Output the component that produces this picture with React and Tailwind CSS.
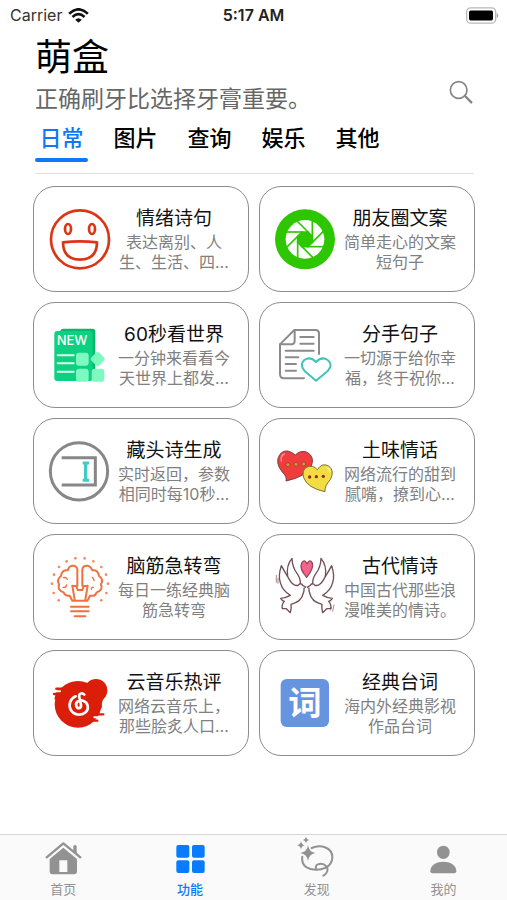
import React, { useState } from 'react';

function SmileIcon() {
  return (
    <svg viewBox="72 87 180 180" className="size-15 shrink-0 overflow-visible" fill="none" stroke="#dc3513" strokeWidth="8" aria-hidden="true">
      <circle cx="165" cy="178" r="87" />
      <ellipse cx="129" cy="147" rx="9" ry="15" />
      <ellipse cx="201" cy="147" rx="9" ry="15" />
      <path d="M114 187 Q165 181 216 187 Q216 238 165 239 Q114 238 114 187Z" strokeLinejoin="round" />
    </svg>
  );
}

function ApertureIcon() {
  return (
    <svg viewBox="63 87 180 180" className="size-15 shrink-0 overflow-visible" aria-hidden="true">
      <circle cx="153" cy="178" r="90" fill="#2ec600" />
      <circle cx="153" cy="178" r="58" fill="#fff" />
      <g transform="translate(153 178)" fill="#2ec600" stroke="#2ec600" strokeWidth="5">
        <path d="M22 -9V9L9 22H-9L-22 9V-9L-9 -22H9Z" />
        {[0, 45, 90, 135, 180, 225, 270, 315].map((angle) => (
          <path key={angle} d="M22 -62V-6" transform={`rotate(${angle})`} />
        ))}
      </g>
    </svg>
  );
}

function NewsIcon() {
  return (
    <svg viewBox="72 87 180 180" className="size-15 shrink-0 overflow-visible" aria-hidden="true">
      <rect x="106" y="98" width="105" height="145" rx="9" fill="#08b86d" />
      <rect x="88" y="105" width="115" height="150" rx="9" fill="#0bd181" />
      <path d="M98 178H146M98 202H146M98 227H146" stroke="#e4fff2" strokeWidth="6" strokeLinecap="round" />
      <text x="95" y="147" fill="#fff" fontSize="39" fontWeight="500" fontFamily="Inter, sans-serif">NEW</text>
      <g fill="#7dfac0">
        <rect x="153" y="170" width="38" height="39" rx="9" />
        <rect x="201" y="172" width="34" height="34" rx="9" transform="rotate(45 218 189)" />
        <rect x="153" y="218" width="38" height="39" rx="9" />
        <rect x="200" y="218" width="38" height="39" rx="9" />
      </g>
    </svg>
  );
}

function LetterIcon() {
  return (
    <svg viewBox="63 87 180 180" className="size-15 shrink-0 overflow-visible" fill="none" stroke="#8b8b8b" strokeWidth="6" strokeLinecap="round" strokeLinejoin="round" aria-hidden="true">
      <path d="M195 174V113Q195 102 184 102H121L78 145V235Q78 247 90 247H150" />
      <path d="M122 102V134Q122 145 110 145H78" />
      <path d="M139 123H179M139 143H179M95 164H179M95 184H133M95 204H126M95 224H126" />
      <path d="M186 254L151 224Q136 206 151 192Q169 180 186 198Q204 180 221 192Q238 206 222 224Z" stroke="#43c1bd" />
    </svg>
  );
}

function InputCursorIcon() {
  return (
    <svg viewBox="72 87 180 180" className="size-15 shrink-0 overflow-visible" fill="none" stroke="#878787" aria-hidden="true">
      <circle cx="162" cy="178" r="86" strokeWidth="9" />
      <path d="M110 137H211V219H110" strokeWidth="9" />
      <path d="M173 153H192M173 205H192" stroke="#41cbc5" strokeWidth="9" />
      <path d="M182 153V205" stroke="#41cbc5" strokeWidth="10" />
    </svg>
  );
}

function HeartsIcon() {
  return (
    <svg viewBox="63 87 180 180" className="size-15 shrink-0 overflow-visible" strokeLinejoin="round" aria-hidden="true">
      <path d="M96 207Q100 194 84 179Q62 151 77 128Q91 110 112 121Q119 125 124 129Q139 113 160 121Q184 136 171 164Q155 194 96 207Z" fill="#f03c3d" stroke="#7c403f" strokeWidth="3" />
      <path d="M82 147Q79 130 91 126" fill="none" stroke="#ff9898" strokeWidth="4" strokeLinecap="round" />
      <path d="M213 239Q160 228 149 197Q142 174 159 165Q177 158 190 173Q204 151 224 162Q243 176 229 203Q211 222 213 239Z" fill="#f4dd43" stroke="#78713b" strokeWidth="3" />
      <path d="M228 179Q226 169 219 167" fill="none" stroke="#fff3a0" strokeWidth="4" strokeLinecap="round" />
      <g fill="#d59635" stroke="#8d3d25" strokeWidth="2">
        <circle cx="102" cy="158" r="6" />
        <circle cx="126" cy="157" r="6" />
        <circle cx="149" cy="156" r="6" />
      </g>
      <g fill="#8d301b">
        <circle cx="167" cy="195" r="5" />
        <circle cx="187" cy="194" r="5" />
        <circle cx="208" cy="193" r="5" />
      </g>
    </svg>
  );
}

function BrainIcon() {
  return (
    <svg viewBox="72 87 180 180" className="size-15 shrink-0 overflow-visible" fill="none" stroke="#f0713f" strokeWidth="6" strokeLinecap="round" strokeLinejoin="round" aria-hidden="true">
      <path d="M157 173V124Q155 112 142 113Q132 114 128 127Q110 125 108 144Q94 155 102 169Q96 187 116 193Q120 205 134 203L142 218H187L195 203Q211 206 215 193Q235 187 228 169Q237 154 222 144Q220 125 202 127Q197 114 187 113Q173 112 172 125V173" />
      <path d="M142 173L149 215M188 173L181 215M142 174H154L158 186H172L176 174H188" />
      <path d="M115 149Q123 147 127 154M202 148Q207 150 207 158M114 178Q123 179 125 171M205 178Q200 177 199 184" strokeWidth="4" />
      <path d="M138 236H191M138 250H191M149 265H181" />
      <g fill="#f58a61" stroke="none">
        <circle cx="151" cy="91" r="4" /><circle cx="179" cy="91" r="4" />
        <circle cx="125" cy="100" r="4" /><circle cx="205" cy="100" r="4" />
        <circle cx="102" cy="117" r="4" /><circle cx="229" cy="117" r="4" />
        <circle cx="87" cy="140" r="4" /><circle cx="243" cy="140" r="4" />
        <circle cx="81" cy="167" r="4" /><circle cx="249" cy="167" r="4" />
        <circle cx="86" cy="195" r="4" /><circle cx="244" cy="195" r="4" />
        <circle cx="101" cy="217" r="4" /><circle cx="229" cy="217" r="4" />
      </g>
    </svg>
  );
}

const doveOutline =
  'M155 177L147 173Q140 162 132 172Q117 176 104 151Q91 130 82 113Q72 143 79 164Q85 188 109 202Q93 211 80 211Q84 218 91 220Q82 230 85 242L97 242L109 254Q113 239 111 229Q143 221 148 195Q151 187 150 181Z';
const doveWing = 'M101 145Q96 112 114 91Q115 119 129 136Q139 149 139 166';

function DovesIcon() {
  return (
    <svg viewBox="63 87 180 180" className="size-15 shrink-0 overflow-visible" fill="none" stroke="#735057" strokeWidth="4" strokeLinecap="round" strokeLinejoin="round" aria-hidden="true">
      <path d={doveWing} />
      <path d={doveOutline} fill="#fff" />
      <g transform="matrix(-1 0 0 1 315 0)">
        <path d={doveWing} />
        <path d={doveOutline} fill="#fff" />
      </g>
      <path d="M158 148Q135 122 143 105Q152 91 159 108Q167 91 175 105Q180 122 158 148Z" fill="#f5648b" stroke="#94485e" />
      <path d="M67 142V163M72 151V166M240 231L236 250M232 239L230 246" strokeWidth="2" />
    </svg>
  );
}

function CloudMusicIcon() {
  return (
    <svg viewBox="72 87 180 180" className="size-15 shrink-0 overflow-visible" aria-hidden="true">
      <g fill="#db1e09">
        <circle cx="159" cy="181" r="70" />
        <circle cx="213" cy="139" r="34" />
        <path d="M188 117L242 157Q228 169 231 190L204 224Z" />
        <path d="M96 134H126V166H88Z" />
      </g>
      <g fill="none" strokeLinecap="round">
        <path d="M94 134H120M87 150H106M205 211H235M190 230H217" stroke="#db1e09" strokeWidth="7" />
        <path d="M91 142H105M208 220H228" stroke="#fff" strokeWidth="6" />
        <path d="M178 152C171 145 160 148 163 160L168 183C169 194 157 196 154 186C150 174 163 167 174 170C190 175 193 194 182 205C169 216 145 214 137 197C129 181 137 163 152 157" stroke="#fff" strokeWidth="8" />
      </g>
    </svg>
  );
}

function WordIcon() {
  return (
    <svg viewBox="753 87 180 180" className="size-15 shrink-0 overflow-visible" aria-hidden="true">
      <rect x="770" y="105" width="145" height="144" rx="18" fill="#6794df" />
      <text x="843" y="214" textAnchor="middle" fill="#fff" fontSize="100" fontWeight="700" fontFamily="Noto Sans CJK SC, sans-serif">词</text>
    </svg>
  );
}

function HomeIcon() {
  return (
    <svg viewBox="130 51 120 120" className="size-10" aria-hidden="true">
      <path d="M141 112L191 70L242 112" fill="none" stroke="currentColor" strokeWidth="7" strokeLinecap="round" strokeLinejoin="round" />
      <path d="M221 93V78Q226 72 231 78V101Z" fill="currentColor" />
      <path d="M191 83L232 117V154Q232 163 223 163H158Q150 163 150 154V117ZM179 121V156H203V121Z" fill="currentColor" fillRule="evenodd" />
    </svg>
  );
}

function GridIcon() {
  return (
    <svg viewBox="510 51 120 120" className="size-10" fill="currentColor" aria-hidden="true">
      <rect x="529" y="75" width="39" height="38" rx="6" />
      <rect x="576" y="75" width="38" height="38" rx="6" />
      <rect x="529" y="121" width="39" height="38" rx="6" />
      <rect x="576" y="121" width="38" height="38" rx="6" />
    </svg>
  );
}

function LassoIcon() {
  return (
    <svg viewBox="891 51 120 120" className="size-10" aria-hidden="true">
      <path d="M935 84C963 71 997 84 997 111C997 144 962 153 932 147C913 142 904 130 907 110M948 144C944 129 970 128 979 139C987 150 980 162 970 167" fill="none" stroke="currentColor" strokeWidth="6" strokeLinecap="round" />
      <path d="M924 76Q927 96 946 99Q927 102 924 123Q921 102 901 99Q921 96 924 76ZM903 64Q905 74 914 76Q905 78 903 88Q901 78 891 76Q901 74 903 64ZM918 51Q920 58 927 60Q920 62 918 69Q916 62 909 60Q916 58 918 51Z" fill="currentColor" />
    </svg>
  );
}

function PersonIcon() {
  return (
    <svg viewBox="1271 51 120 120" className="size-10" fill="currentColor" aria-hidden="true">
      <ellipse cx="1329" cy="97" rx="19" ry="20" />
      <path d="M1290 154C1290 134 1310 125 1329 125C1348 125 1368 134 1368 154Q1368 160 1361 160H1297Q1290 160 1290 154Z" />
    </svg>
  );
}

const features = [
  { title: '情绪诗句', lines: ['表达离别、人', '生、生活、四…'], Icon: SmileIcon },
  { title: '朋友圈文案', lines: ['简单走心的文案', '短句子'], Icon: ApertureIcon },
  { title: '60秒看世界', lines: ['一分钟来看看今', '天世界上都发…'], Icon: NewsIcon },
  { title: '分手句子', lines: ['一切源于给你幸', '福，终于祝你…'], Icon: LetterIcon },
  { title: '藏头诗生成', lines: ['实时返回，参数', '相同时每10秒…'], Icon: InputCursorIcon },
  { title: '土味情话', lines: ['网络流行的甜到', '腻嘴，撩到心…'], Icon: HeartsIcon },
  { title: '脑筋急转弯', lines: ['每日一练经典脑', '筋急转弯'], Icon: BrainIcon },
  { title: '古代情诗', lines: ['中国古代那些浪', '漫唯美的情诗。'], Icon: DovesIcon },
  { title: '云音乐热评', lines: ['网络云音乐上，', '那些脍炙人口…'], Icon: CloudMusicIcon },
  { title: '经典台词', lines: ['海内外经典影视', '作品台词'], Icon: WordIcon },
];

const categories = ['日常', '图片', '查询', '娱乐', '其他'];

const navItems = [
  { label: '首页', Icon: HomeIcon },
  { label: '功能', Icon: GridIcon },
  { label: '发现', Icon: LassoIcon },
  { label: '我的', Icon: PersonIcon },
];

function StatusBar() {
  return (
    <div className="grid h-[30px] grid-cols-3 items-center px-2 text-[16px] leading-5 text-[#333]">
      <div className="flex items-center gap-[6px] pl-[2px]">
        <span>Carrier</span>
        <svg viewBox="204 20 62 45" className="h-[15px] w-[21px]" fill="none" stroke="#111" strokeWidth="8" aria-hidden="true">
          <path d="M207 37Q235 11 263 37M217 47Q235 30 253 47" />
          <path d="M235 64L225 55Q235 46 245 55Z" fill="#111" stroke="none" />
        </svg>
      </div>
      <div className="text-center text-[16px] font-semibold text-[#222]">5:17 AM</div>
      <svg viewBox="642 17 99 50" className="h-[17px] w-[33px] justify-self-end" aria-hidden="true">
        <rect x="644" y="19" width="87" height="46" rx="12" fill="none" stroke="#b9b9b9" strokeWidth="4" />
        <rect x="651" y="27" width="72" height="30" rx="5" fill="#000" />
        <path d="M735 36Q741 42 735 48Z" fill="#aaa" stroke="#aaa" strokeWidth="2" />
      </svg>
    </div>
  );
}

function FeatureCard({ title, lines, Icon }) {
  return (
    <button type="button" className="flex h-[106px] items-center gap-[6px] rounded-[22px] border border-[#8c8c8c] bg-white px-[15px]">
      <Icon />
      <span className="flex min-w-0 flex-1 flex-col items-center whitespace-nowrap">
        <span className="text-[19px] leading-[26px] text-[#111]">{title}</span>
        {lines.map((line) => (
          <span key={line} className="text-[16px] leading-5 text-[#808080]">{line}</span>
        ))}
      </span>
    </button>
  );
}

export default function App() {
  const [category, setCategory] = useState('日常');
  const [page, setPage] = useState('功能');

  return (
    <div lang="zh-CN" className="flex min-h-screen flex-col bg-white font-['Inter','Noto_Sans_CJK_SC',sans-serif] text-black">
      <StatusBar />
      <header className="mr-[33px] ml-[35px] border-b border-[#e2e2e2]">
        <div className="flex items-end justify-between">
          <div>
            <h1 className="text-[37px] leading-[56px]">萌盒</h1>
            <p className="text-[23px] leading-[26px] text-[#666]">正确刷牙比选择牙膏重要。</p>
          </div>
          <button type="button" aria-label="搜索" className="pb-[7px]">
            <svg viewBox="582 240 75 75" className="size-[25px]" fill="none" stroke="#858585" strokeLinecap="round" aria-hidden="true">
              <circle cx="611" cy="270" r="25" strokeWidth="5" />
              <path d="M630 288L649 307" strokeWidth="7" />
            </svg>
          </button>
        </div>
        <nav aria-label="分类" className="flex gap-[21px] pt-[6px] pb-[11px]">
          {categories.map((name) => (
            <button
              key={name}
              type="button"
              onClick={() => setCategory(name)}
              className={`flex w-[53px] flex-col items-center text-[22px] leading-10 font-medium ${name === category ? 'text-[#0f78fa]' : 'text-black'}`}
            >
              {name}
              <span className={`h-1 w-full rounded-full ${name === category ? 'bg-[#0f78fa]' : 'bg-transparent'}`} />
            </button>
          ))}
        </nav>
      </header>
      <main className="grid grid-cols-2 gap-[10px] pt-3 pr-8 pb-6 pl-[33px]">
        {features.map((feature) => (
          <FeatureCard key={feature.title} {...feature} />
        ))}
      </main>
      <nav aria-label="主导航" className="mt-auto grid grid-cols-4 border-t border-[#d5d5d5] bg-[#fafafa] pt-[2px] pb-px">
        {navItems.map(({ label, Icon }) => (
          <button
            key={label}
            type="button"
            onClick={() => setPage(label)}
            className={`flex flex-col items-center gap-[2px] text-[13px] leading-5 ${label === page ? 'font-medium text-[#087bff]' : 'text-[#929292]'}`}
          >
            <Icon />
            {label}
          </button>
        ))}
      </nav>
    </div>
  );
}
